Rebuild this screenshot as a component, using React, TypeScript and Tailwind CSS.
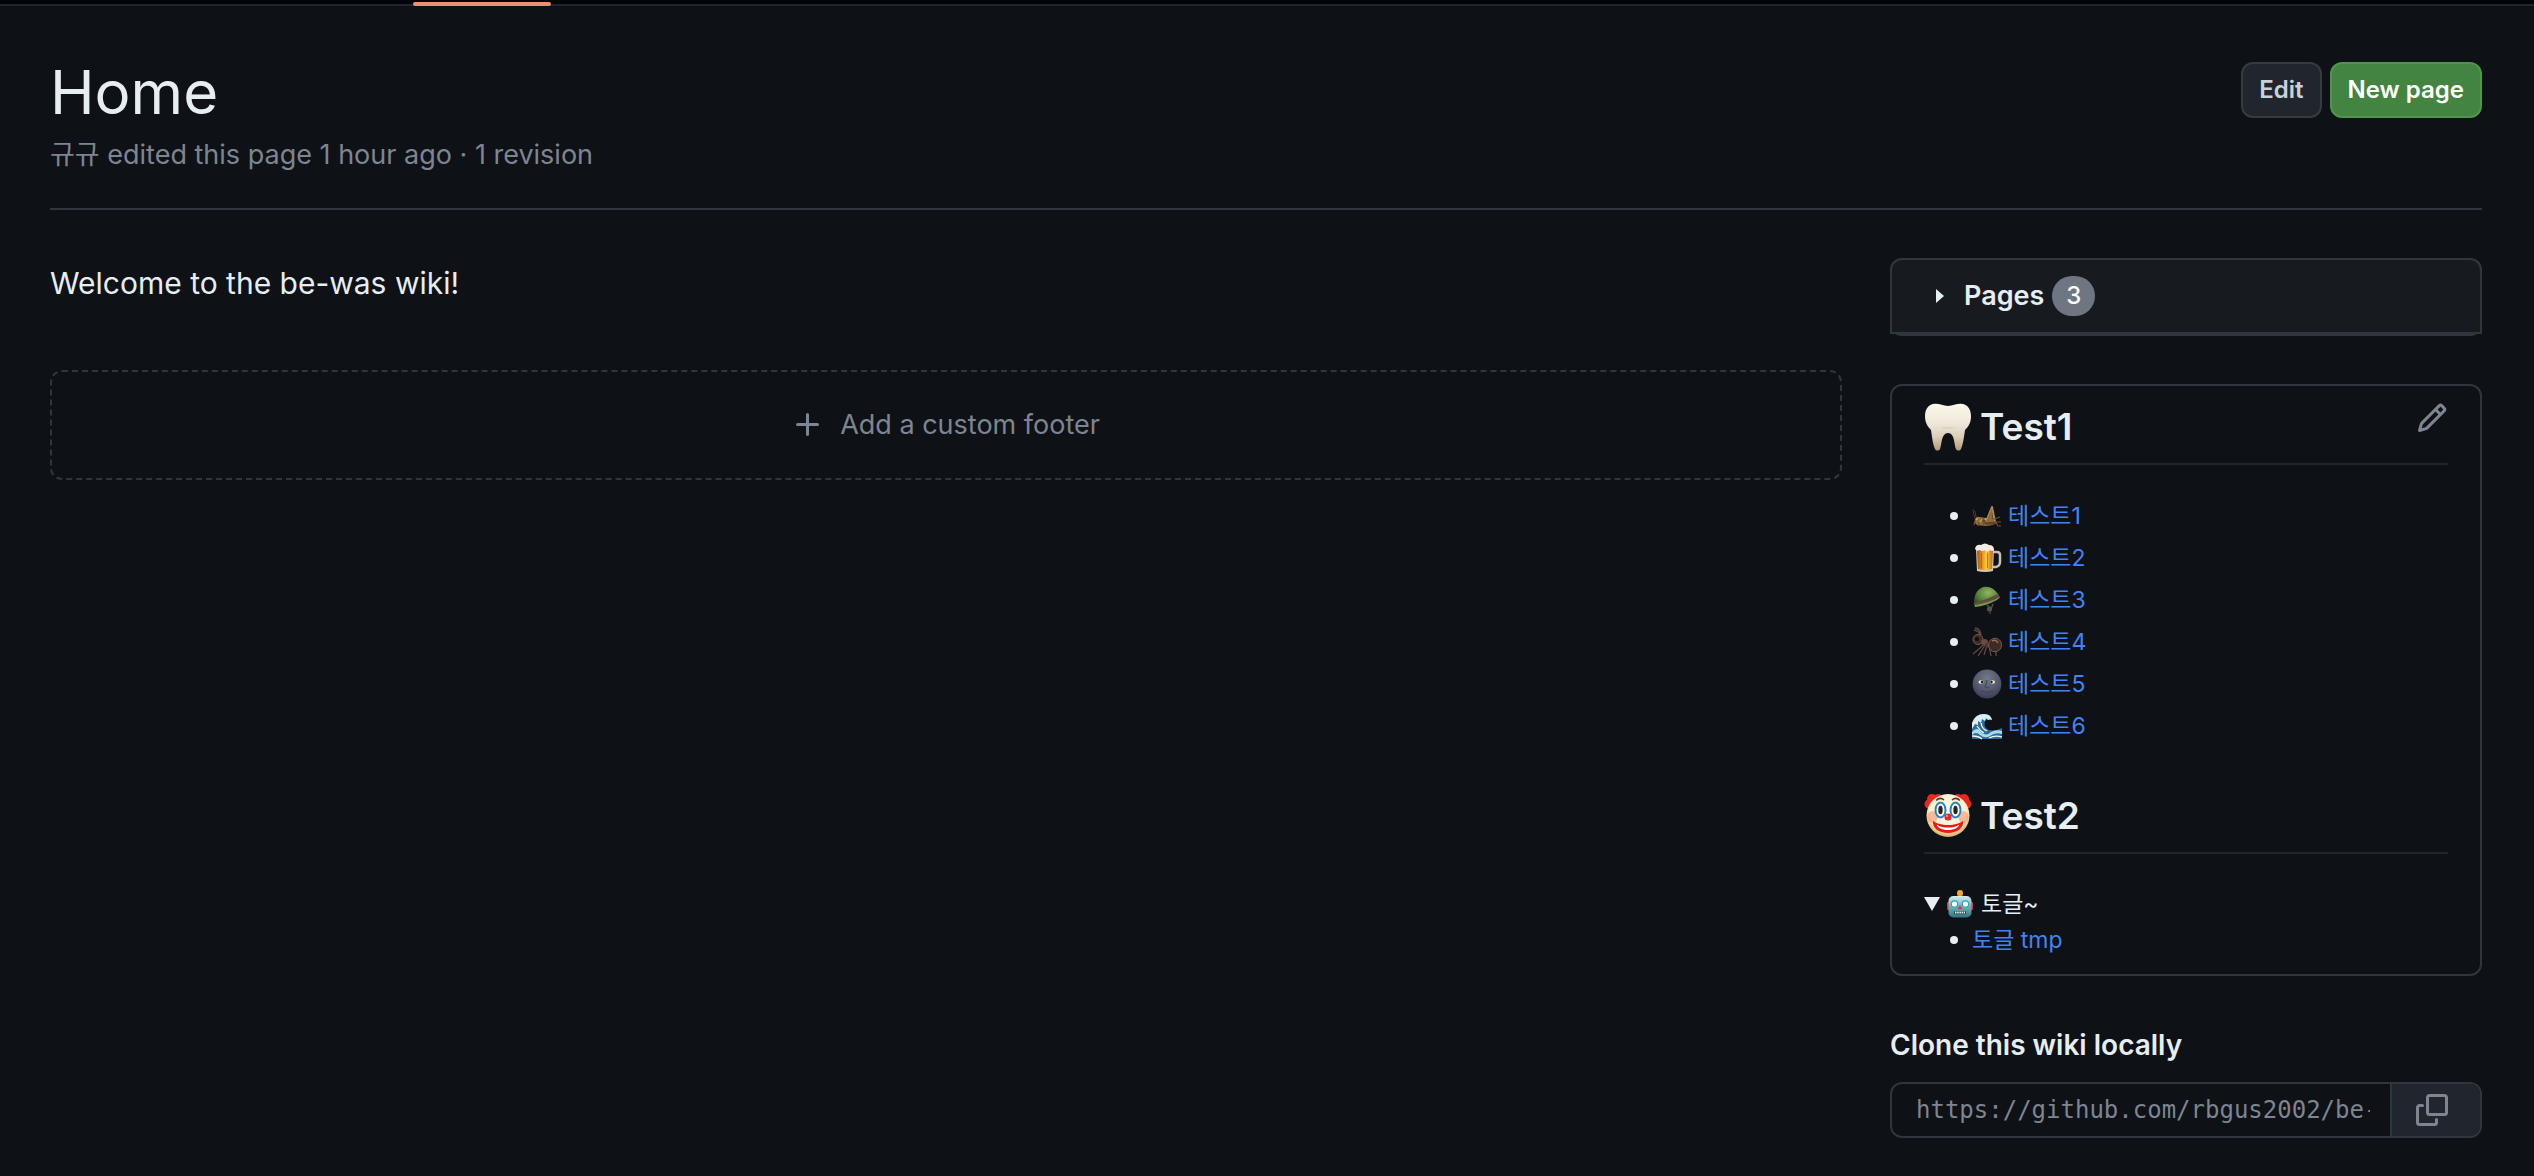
import React from 'react';

const PencilIcon = () => (
  <svg className="w-8 h-8" viewBox="0 0 16 16" fill="currentColor" aria-hidden="true">
    <path d="M11.013 1.427a1.75 1.75 0 0 1 2.474 0l1.086 1.086a1.75 1.75 0 0 1 0 2.474l-8.61 8.61c-.21.21-.47.364-.756.445l-3.251.93a.75.75 0 0 1-.927-.928l.929-3.25c.081-.286.235-.547.445-.758l8.61-8.61Zm.176 4.823L9.75 4.81l-6.286 6.287a.253.253 0 0 0-.064.108l-.558 1.953 1.953-.558a.253.253 0 0 0 .108-.064Zm1.238-3.763a.25.25 0 0 0-.354 0L10.811 3.75l1.439 1.44 1.263-1.263a.25.25 0 0 0 0-.354Z" />
  </svg>
);

const CopyIcon = () => (
  <svg className="w-8 h-8" viewBox="0 0 16 16" fill="currentColor" aria-hidden="true">
    <path d="M0 6.75C0 5.784.784 5 1.75 5h1.5a.75.75 0 0 1 0 1.5h-1.5a.25.25 0 0 0-.25.25v7.5c0 .138.112.25.25.25h7.5a.25.25 0 0 0 .25-.25v-1.5a.75.75 0 0 1 1.5 0v1.5A1.75 1.75 0 0 1 9.25 16h-7.5A1.75 1.75 0 0 1 0 14.25Z" />
    <path d="M5 1.75C5 .784 5.784 0 6.75 0h7.5C15.216 0 16 .784 16 1.75v7.5A1.75 1.75 0 0 1 14.25 11h-7.5A1.75 1.75 0 0 1 5 9.25Zm1.75-.25a.25.25 0 0 0-.25.25v7.5c0 .138.112.25.25.25h7.5a.25.25 0 0 0 .25-.25v-7.5a.25.25 0 0 0-.25-.25Z" />
  </svg>
);

const PlusIcon = () => (
  <svg className="w-8 h-8" viewBox="0 0 16 16" fill="currentColor" aria-hidden="true">
    <path d="M7.75 2a.75.75 0 0 1 .75.75V7h4.25a.75.75 0 0 1 0 1.5H8.5v4.25a.75.75 0 0 1-1.5 0V8.5H2.75a.75.75 0 0 1 0-1.5H7V2.75A.75.75 0 0 1 7.75 2Z" />
  </svg>
);

const Tooth = () => (
  <svg className="w-12 h-12" viewBox="0 0 48 48" aria-hidden="true">
    <defs>
      <linearGradient id="tooth" x1="0" y1="0" x2="0" y2="1">
        <stop offset="0" stopColor="#fbf8ec" />
        <stop offset="0.4" stopColor="#efe9da" />
        <stop offset="0.7" stopColor="#dccfbb" />
        <stop offset="1" stopColor="#b59b78" />
      </linearGradient>
      <radialGradient id="toothShade" cx="0.5" cy="0.55" r="0.35">
        <stop offset="0" stopColor="#a8957f" stopOpacity="0.5" />
        <stop offset="1" stopColor="#a8957f" stopOpacity="0" />
      </radialGradient>
    </defs>
    <path d="M11 .8C16 .6 19 3 24 3S32 .6 37 .8C43 1 47 6 47 13c0 6-2 10-6 14-1 7-2 15-4 19-1 2-4 2-5 0-2-4-1-16-8-16s-6 12-8 16c-1 2-4 2-5 0-2-4-3-12-4-19C3 23 1 19 1 13 1 6 5 1 11 .8Z" fill="url(#tooth)" />
    <path d="M12 20C16 26 32 26 36 20v7H12Z" fill="url(#toothShade)" />
  </svg>
);

const Clown = () => (
  <svg className="w-12 h-12" viewBox="0 0 48 48" aria-hidden="true">
    <defs>
      <radialGradient id="clown" cx="0.5" cy="0.4" r="0.6">
        <stop offset="0" stopColor="#fffdf0" />
        <stop offset="0.7" stopColor="#fbf0cf" />
        <stop offset="1" stopColor="#dcae5c" />
      </radialGradient>
    </defs>
    <g fill="#e8281f">
      <circle cx="8" cy="7" r="5" />
      <circle cx="5" cy="12" r="4.5" />
      <circle cx="14" cy="6" r="4" />
      <circle cx="40" cy="7" r="5" />
      <circle cx="43" cy="12" r="4.5" />
      <circle cx="34" cy="6" r="4" />
    </g>
    <circle cx="24" cy="23.500" r="21.500" fill="url(#clown)" />
    <ellipse cx="8.500" cy="25" rx="5" ry="6" fill="#ff8b68" opacity="0.55" />
    <ellipse cx="39.500" cy="25" rx="5" ry="6" fill="#ff8b68" opacity="0.55" />
    <g fill="#fff" stroke="#2384c6" strokeWidth="2">
      <ellipse cx="16.500" cy="18" rx="5" ry="7.500" />
      <ellipse cx="31.500" cy="18" rx="5" ry="7.500" />
    </g>
    <g fill="#2c2420">
      <ellipse cx="16.500" cy="18" rx="2.200" ry="4.300" />
      <ellipse cx="31.500" cy="18" rx="2.200" ry="4.300" />
    </g>
    <path d="M12 8.500q4-4 8-.5M28 8q4-3.500 8 .5" fill="none" stroke="#54331e" strokeWidth="1.500" />
    <path d="M9 29c3 2 8 4 15 4s12-2 15-4c1 7-6 12-15 12S8 36 9 29Z" fill="#f01818" />
    <path d="M12.500 32.500C16 35 20 35.500 24 35.500s8-.5 11.500-3C34 36.500 29 38 24 38s-10-1.500-11.500-5.500Z" fill="#fff" />
    <circle cx="24" cy="25" r="3.600" fill="#e32a25" />
    <circle cx="23" cy="24" r="1.200" fill="#ff8478" />
  </svg>
);

const Robot = () => (
  <svg className="w-[26px] h-7" viewBox="0 0 26 28" aria-hidden="true">
    <defs>
      <linearGradient id="robot" x1="0" y1="0" x2="0" y2="1">
        <stop offset="0" stopColor="#d2eeee" />
        <stop offset="0.45" stopColor="#7cb5bb" />
        <stop offset="1" stopColor="#2f7580" />
      </linearGradient>
    </defs>
    <rect x="0" y="12" width="3" height="8" rx="1" fill="#d33a35" />
    <rect x="23" y="12" width="3" height="8" rx="1" fill="#d33a35" />
    <rect x="10" y="4" width="6" height="3" rx="1" fill="#a93b33" />
    <circle cx="13" cy="3" r="3" fill="#f0aa20" />
    <rect x="1.500" y="6" width="23" height="21.500" rx="5" fill="url(#robot)" />
    <circle cx="7.500" cy="14" r="3.200" fill="#fff" stroke="#25a3c4" strokeWidth="1.200" />
    <circle cx="18.500" cy="14" r="3.200" fill="#fff" stroke="#25a3c4" strokeWidth="1.200" />
    <path d="M13 15l2.300 4h-4.600Z" fill="#d8382f" />
    <rect x="7" y="21" width="12" height="3.200" rx="1" fill="#29434a" />
    <path d="M8 22.500h10" stroke="#e9f6f6" strokeWidth="2" strokeDasharray="1.500 .7" />
  </svg>
);

const Cricket = () => (
  <svg className="w-[30px] h-[30px]" viewBox="0 0 30 30" aria-hidden="true">
    <path d="M1 8q0 5 3 12M3 10q0 4 2 8" stroke="#4a3a28" fill="none" />
    <path d="M3 18q2-3 5-2l12 2q4 1 5 4-5 3-12 3l-8-1q-3-2-2-6Z" fill="#8d6a3c" />
    <path d="M9 18l14 2 1 3-10 1Z" fill="#5c4226" />
    <path d="M14 21L20 6l3 15" fill="none" stroke="#b18b54" strokeWidth="2" strokeLinejoin="round" />
    <path d="M14 21L20 7l1 14Z" fill="#8d6a3c" />
    <path d="M3 20l-1 4M7 21l-1 4M11 21l1 4M15 21l3 3M23 20l3 5h3M22 18l6-2M21 21l8 0" stroke="#6c5232" strokeWidth="1.200" fill="none" />
    <path d="M4 19l2-2M8 21l2-3M13 19l1-2" stroke="#d3ac6b" strokeWidth="1.200" />
  </svg>
);

const Beer = () => (
  <svg className="w-[30px] h-[30px]" viewBox="0 0 30 30" aria-hidden="true">
    <defs>
      <linearGradient id="beer" x1="0" y1="0" x2="1" y2="0">
        <stop offset="0" stopColor="#9c5415" />
        <stop offset="0.3" stopColor="#e48e1c" />
        <stop offset="0.6" stopColor="#ffc83d" />
        <stop offset="1" stopColor="#b96a18" />
      </linearGradient>
    </defs>
    <path d="M21 9h4q3 0 3 3v7q0 4-4 5h-3" fill="none" stroke="#c9bfae" strokeWidth="2.500" />
    <path d="M4 6h18l-1 22q-8 2-16 0Z" fill="#d4c8b8" />
    <path d="M5 7h16l-1 19q-7 2-14 0Z" fill="url(#beer)" />
    <path d="M9.500 10v15M15.500 10v15" stroke="#a55f17" opacity="0.7" />
    <path d="M3 6Q4 1 9 2q4-3 8 0 5 0 5 5-2 2-4 0-3 3-5 0-3 2-5 0-3 2-5-1Z" fill="#f7ece5" />
  </svg>
);

const Helmet = () => (
  <svg className="w-[30px] h-[30px]" viewBox="0 0 30 30" aria-hidden="true">
    <defs>
      <radialGradient id="helmet" cx="0.55" cy="0.3" r="0.65">
        <stop offset="0" stopColor="#91b75a" />
        <stop offset="0.6" stopColor="#5b8340" />
        <stop offset="1" stopColor="#324e2a" />
      </radialGradient>
    </defs>
    <path d="M15 20l4 4 2-5" fill="none" stroke="#5d5350" strokeWidth="1.300" />
    <path d="M2 21Q1 6 11 2q9-2 15 7l2 4Q15 17 3 22Z" fill="url(#helmet)" />
    <path d="M2 18Q14 15 26 9l2 3Q16 19 2 20Z" fill="#604f3e" />
    <path d="M3 20q13-2 25-8l-3 3Q14 21 3 22Z" fill="#739751" />
    <circle cx="17.500" cy="24" r="2.600" fill="#55504f" />
    <path d="M18 26v3" stroke="#49413c" strokeWidth="1.500" />
  </svg>
);

const Ant = () => (
  <svg className="w-[30px] h-[30px]" viewBox="0 0 30 30" aria-hidden="true">
    <path d="M8 9Q8 4 2 3M9 8Q8 1 3 1M12 17l-4 4-7 6M13 18l-3 5-4 6M15 18l-3 10M17 18l1 6 1 5M20 20l4 5v4" fill="none" stroke="#61483f" strokeWidth="1.300" />
    <circle cx="6" cy="12.500" r="5" fill="#3d2b27" stroke="#785b50" />
    <circle cx="5" cy="12" r="2" fill="#120d0c" />
    <ellipse cx="12.500" cy="15" rx="3.500" ry="3" fill="#6b4b40" />
    <ellipse cx="16" cy="18" rx="3" ry="2.500" fill="#503830" />
    <ellipse cx="23" cy="18" rx="6.500" ry="6.800" fill="#3e2b26" stroke="#79594d" />
    <path d="M20 14q4-2 6 2" fill="none" stroke="#946e60" strokeWidth="1.500" />
  </svg>
);

const Moon = () => (
  <svg className="w-[30px] h-[30px]" viewBox="0 0 30 30" aria-hidden="true">
    <defs>
      <radialGradient id="moon" cx="0.5" cy="0.3" r="0.7">
        <stop offset="0" stopColor="#747a8c" />
        <stop offset="0.6" stopColor="#535a6e" />
        <stop offset="1" stopColor="#394056" />
      </radialGradient>
    </defs>
    <circle cx="15" cy="15" r="14.400" fill="url(#moon)" />
    <ellipse cx="9" cy="13" rx="2.600" ry="1.700" fill="#efe6c8" />
    <ellipse cx="20.500" cy="13" rx="2.600" ry="1.700" fill="#efe6c8" />
    <circle cx="10" cy="13" r="1.200" fill="#1b1c22" />
    <circle cx="19.500" cy="13" r="1.200" fill="#1b1c22" />
    <path d="M15 11q-1 5-2 7 2 2 4 0M9 22q6 3 12 0" fill="none" stroke="#3c4054" />
  </svg>
);

const Wave = () => (
  <svg className="w-[30px] h-[30px]" viewBox="0 0 30 30" aria-hidden="true">
    <path d="M0 28V12Q3 3 12 3q7 0 8 6-3-2-6 0-3 3 0 8 5 5 16 0v11Z" fill="#2c6d9c" />
    <path d="M0 12Q3 3 12 3q7 0 8 6-2-1-4 0l-2-2-1 3-3-2-1 4-3-2v4l-3-1-3 5Z" fill="#d8eef4" />
    <path d="M0 21q5-6 9 0 5 5 10 0 5-3 11-1v3q-7-2-12 2-5 3-10-1-4-4-8 0Z" fill="#a9dcea" />
    <path d="M5 15q3 5 7 7M9 12q1 6 6 8M0 25q7 0 10 3M17 27q6-3 13-1" fill="none" stroke="#f0fafb" strokeWidth="1.300" />
  </svg>
);

const pages = [
  { label: '테스트1', Icon: Cricket },
  { label: '테스트2', Icon: Beer },
  { label: '테스트3', Icon: Helmet },
  { label: '테스트4', Icon: Ant },
  { label: '테스트5', Icon: Moon },
  { label: '테스트6', Icon: Wave },
];

const Bullet = () => <span className="w-2 h-2 mr-[14px] rounded-full bg-[#e6edf3]"></span>;

const Sidebar = () => {
  return (
    <aside className="w-[592px] shrink-0">
      {/* Page list */}
      <div className="rounded-xl border-2 border-t-0 border-[#30363d] h-[78px] mb-12">
        <details className="-mx-0.5 rounded-t-xl border-2 border-[#30363d] bg-[#171b20]">
          <summary className="flex items-center h-[72px] pl-11 list-none cursor-pointer">
            <svg className="w-2 h-[14px] mr-5" viewBox="0 0 8 14" fill="#e6edf3" aria-hidden="true">
              <path d="M0 0l8 7-8 7Z" />
            </svg>
            <span className="text-[27px] font-semibold">Pages</span>
            <span className="ml-2 w-[43px] h-10 rounded-full bg-[#6e7681] text-white text-2xl leading-10 font-medium text-center">3</span>
          </summary>
        </details>
      </div>

      {/* Custom sidebar */}
      <div className="relative rounded-xl border-2 border-[#30363d] px-8 pt-4 pb-4">
        <button type="button" aria-label="Edit sidebar" className="absolute top-4 right-8 text-[#7d8590]">
          <PencilIcon />
        </button>
        <h2 className="flex items-center gap-2 h-[63px] pb-3 border-b-2 border-[#21262d] text-[37px] font-semibold">
          <Tooth />
          Test1
        </h2>
        <ul className="mt-[30px] pl-[26px] text-[23px]">
          {pages.map(({ label, Icon }) => (
            <li key={label} className="flex items-center h-[42px]">
              <Bullet />
              <Icon />
              <a href="#" className="ml-1.5 text-[#4184f5]">{label}</a>
            </li>
          ))}
        </ul>
        <h2 className="flex items-center gap-2 h-[63px] mt-11 pb-3 border-b-2 border-[#21262d] text-[37px] font-semibold">
          <Clown />
          Test2
        </h2>
        <details open className="mt-8 text-[23px]">
          <summary className="flex items-center h-9 list-none cursor-pointer">
            <svg className="w-4 h-[14px] mr-[7px]" viewBox="0 0 16 14" fill="#e6edf3" aria-hidden="true">
              <path d="M0 0h16L8 14Z" />
            </svg>
            <Robot />
            <span className="ml-2">토글~</span>
          </summary>
          <ul className="pl-[26px]">
            <li className="flex items-center h-9">
              <Bullet />
              <a href="#" className="text-[#4184f5]">토글 tmp</a>
            </li>
          </ul>
        </details>
      </div>

      {/* Clone url */}
      <label htmlFor="clone-url" className="block mt-12 mb-4 text-[28px] leading-[42px] font-semibold">Clone this wiki locally</label>
      <div className="flex h-14 rounded-xl border-2 border-[#30363d] overflow-hidden">
        <input
          id="clone-url"
          type="text"
          readOnly
          value="https://github.com/rbgus2002/be-was.wiki.git"
          className="flex-1 min-w-0 pl-6 pr-5 bg-transparent font-['DejaVu_Sans_Mono',monospace] text-2xl text-[#7d8590] outline-none"
        />
        <button type="button" aria-label="Copy to clipboard" className="w-[90px] flex items-center pl-6 border-l-2 border-[#30363d] bg-[#21262d] text-[#7d8590]">
          <CopyIcon />
        </button>
      </div>
    </aside>
  );
};

const App = () => {
  return (
    <div className="min-h-screen bg-[#0e1116] text-[#e6edf3] font-['Inter','Noto_Sans_CJK_KR',sans-serif]">
      {/* Bottom edge of the repository tabs */}
      <div className="relative h-1.5 bg-[#010409] border-b-2 border-[#21262d]">
        <div className="absolute left-[413px] top-0.5 w-[138px] h-1 rounded-full bg-[#ec8e6f]"></div>
      </div>

      <div className="pl-[50px] pr-[52px] pt-14 pb-9">
        <header className="flex items-start justify-between pb-8 border-b-2 border-[#30363d]">
          <div>
            <h1 className="text-[60px] leading-[60px]">Home</h1>
            <p className="mt-3 text-[27px] leading-[42px] text-[#7d8590]">규규 edited this page 1 hour ago · 1 revision</p>
          </div>
          <div className="flex gap-2">
            <button type="button" className="h-14 px-4 rounded-xl border-2 border-[#363b42] bg-[#21262d] text-[#c9d1d9] text-2xl font-semibold">Edit</button>
            <button type="button" className="h-14 px-4 rounded-xl border-2 border-[#4f9550] bg-[#438440] text-white text-2xl font-semibold">New page</button>
          </div>
        </header>

        <div className="flex gap-12 mt-12">
          <main className="flex-1 min-w-0">
            <p className="text-[30px] leading-[50px]">Welcome to the be-was wiki!</p>
            <a href="#" className="flex items-center justify-center gap-4 mt-[62px] h-[110px] rounded-xl border-2 border-dashed border-[#30363d] text-[27px] text-[#7d8590]">
              <PlusIcon />
              Add a custom footer
            </a>
          </main>
          <Sidebar />
        </div>
      </div>
    </div>
  );
};

export default App;
